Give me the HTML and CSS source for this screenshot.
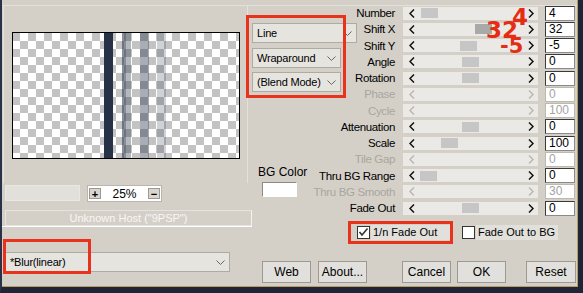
FILE: index.html
```html
<!DOCTYPE html>
<html lang="en">

<head>
    <meta charset="UTF-8">
    <meta name="viewport" content="width=device-width, initial-scale=1.0">
    <title>Line Filter</title>
    <link rel="stylesheet" href="styles.css">
</head>

<body>
    <div class="win">
        <div class="client">
            <!-- left : preview -->
            <div class="left">
                <div class="preview-panel">
                    <div class="preview"></div>
                </div>
                <div class="zoom-row">
                    <div class="zoom-field"></div>
                    <div class="zoom-box">
                        <button type="button" class="zbtn">+</button>
                        <span class="zval">25%</span>
                        <button type="button" class="zbtn">&minus;</button>
                    </div>
                </div>
                <div class="host">Unknown Host ("9PSP")</div>
                <div class="host-line"></div>
                <div class="combo blur">
                    <span>*Blur(linear)</span>
                    <svg width="9" height="5" viewBox="0 0 9 5"><polyline points="0.5,0.5 4.5,4.5 8.5,0.5" /></svg>
                </div>
            </div>

            <!-- right : settings -->
            <div class="right">
                <div class="controls">
                    <div class="mid">
                        <div class="combo c-line">
                            <span>Line</span>
                            <svg width="9" height="5" viewBox="0 0 9 5"><polyline points="0.5,0.5 4.5,4.5 8.5,0.5" /></svg>
                        </div>
                        <div class="combo c-wrap">
                            <span>Wraparound</span>
                            <svg width="9" height="5" viewBox="0 0 9 5"><polyline points="0.5,0.5 4.5,4.5 8.5,0.5" /></svg>
                        </div>
                        <div class="combo c-blend">
                            <span>(Blend Mode)</span>
                            <svg width="9" height="5" viewBox="0 0 9 5"><polyline points="0.5,0.5 4.5,4.5 8.5,0.5" /></svg>
                        </div>
                        <div class="bgcolor">
                            <span>BG Color</span>
                            <div class="swatch"></div>
                        </div>
                    </div>

                    <div class="params" id="params"></div>
                </div>

                <div class="checks">
                    <div class="chk">
                        <span class="box">
                            <svg width="11" height="11" viewBox="0 0 11 11"><polyline points="1.5,5 4,8 9.5,1.5" /></svg>
                        </span>
                        <span class="chk-label l1">1/n Fade Out</span>
                    </div>
                    <div class="chk chk2">
                        <span class="box"></span>
                        <span class="chk-label l2">Fade Out to BG</span>
                    </div>
                </div>

                <div class="buttons">
                    <button type="button" class="btn">Web</button>
                    <button type="button" class="btn b-about">About...</button>
                    <button type="button" class="btn b-cancel">Cancel</button>
                    <button type="button" class="btn b-ok">OK</button>
                    <button type="button" class="btn b-reset">Reset</button>
                </div>
            </div>
        </div>

        <!-- red marks -->
        <div class="mark m-combos"></div>
        <div class="mark m-blur"></div>
        <div class="mark m-fade"></div>
        <span class="note n-4">4</span>
        <span class="note n-32">32</span>
        <span class="note n-5">-5</span>
    </div>

    <script>
        // name, value, thumb offset (px in track), enabled
        const rows = [
            ["Number", "4", 4, true],
            ["Shift X", "32", 58, true],
            ["Shift Y", "-5", 43, true],
            ["Angle", "0", 45, true],
            ["Rotation", "0", 45, true],
            ["Phase", "0", null, false],
            ["Cycle", "100", null, false],
            ["Attenuation", "0", 45, true],
            ["Scale", "100", 24, true],
            ["Tile Gap", "0", null, false],
            ["Thru BG Range", "0", 3, true],
            ["Thru BG Smooth", "30", null, false],
            ["Fade Out", "0", 45, true]
        ];

        const $params = document.getElementById("params");
        const arrL = '<svg width="6" height="9" viewBox="0 0 6 9"><polyline points="5,0.5 1,4.5 5,8.5" /></svg>';
        const arrR = '<svg width="6" height="9" viewBox="0 0 6 9"><polyline points="1,0.5 5,4.5 1,8.5" /></svg>';

        rows.forEach(function (r, i) {
            const off = r[3] ? "" : " off";
            let thumb = "";
            if (r[2] !== null) {
                thumb = '<span class="thumb' + (i === 1 ? ' hot' : '') + '" style="margin-left:' + r[2] + 'px"></span>';
            }
            $params.insertAdjacentHTML("beforeend",
                '<div class="plabel' + off + '">' + r[0] + '</div>' +
                '<div class="sb' + off + '"><span class="arr l">' + arrL + '</span><span class="track">' + thumb +
                '</span><span class="arr r">' + arrR + '</span></div>' +
                '<div class="val' + off + '">' + r[1] + '</div>');
        });
    </script>
</body>

</html>
```

FILE: styles.css
```css
* {
    margin: 0;
    padding: 0;
    box-sizing: border-box;
}

body {
    width: 583px;
    height: 293px;
    overflow: hidden;
    background-color: #1f2536;
    font-family: "Liberation Sans", Arial, sans-serif;
    font-size: 11px;
    color: #000;
}

button {
    font-family: inherit;
    font-size: inherit;
    color: inherit;
}

.win {
    position: relative;
    width: 583px;
    height: 293px;
    border-left: 2px solid #2a3247;
    border-right: 5px solid #1f2536;
    border-bottom: 6px solid #1f2536;
}

.client {
    display: flex;
    height: 100%;
    background: linear-gradient(#d4d0c8 5px, #e4e1db 5px 6px, #d4d0c8 6px);
    border-right: 1px solid #b89d63;
    border-bottom: 1px solid #b89d63;
}

/* left side */
.left {
    width: 250px;
    display: flex;
    flex-direction: column;
    align-items: flex-start;
}

.preview-panel {
    margin: 5px 0 0 1px;
    width: 245px;
    height: 178px;
    border: 1px solid #e4e1db;
    border-bottom: 0;
    padding: 26px 0 0 8px;
}

.preview {
    width: 228px;
    height: 127px;
    border: 1px solid #000;
    background:
        linear-gradient(90deg,
            transparent 91px, #283246 91px 100px,
            transparent 100px 109px, rgba(40, 50, 70, 0.55) 109px 113px,
            rgba(40, 50, 70, 0.35) 113px 118px,
            transparent 118px 127px, rgba(40, 50, 70, 0.4) 127px 136px,
            transparent 136px 144px, rgba(40, 50, 70, 0.22) 144px 153px,
            transparent 153px),
        conic-gradient(#fff 25%, #c3c3c3 0 50%, #fff 0 75%, #c3c3c3 0);
    background-size: auto, 16px 16px;
    background-position: 0 0, -1px 0;
}

.zoom-row {
    display: flex;
    gap: 7px;
    margin: 2px 0 0 3px;
}

.zoom-field {
    width: 75px;
    height: 16px;
    background-color: #e2e0db;
    border: 1px solid #e9e7e2;
}

.zoom-box {
    width: 75px;
    height: 17px;
    background-color: #fff;
    border: 1px solid #b9b6af;
    display: flex;
    align-items: center;
    justify-content: space-between;
    padding: 0 1px;
}

.zbtn {
    width: 12px;
    height: 11px;
    background-color: #d9d6cf;
    border: 1px solid #9c9992;
    font-size: 11px;
    line-height: 8px;
    font-weight: bold;
}

.zval {
    font-size: 12px;
}

.host {
    margin: 8px 0 0 3px;
    width: 247px;
    height: 16px;
    border: 1px solid #e6e4df;
    border-right-color: #f4f3f0;
    color: #f7f7f5;
    font-size: 11px;
    line-height: 14px;
    text-align: center;
}

.host-line {
    width: 250px;
    height: 1px;
    background-color: #fff;
}

/* combos */
.combo {
    height: 20px;
    display: flex;
    align-items: center;
    justify-content: space-between;
    padding: 0 4px;
    background-color: #e6e4df;
    border: 1px solid #aeaba4;
    letter-spacing: -0.2px;
}

.combo svg polyline {
    fill: none;
    stroke: #6a6761;
    stroke-width: 1;
}

.blur {
    margin: 25px 0 0 3px;
    width: 225px;
}

.mid {
    width: 95px;
    padding-top: 23px;
    display: flex;
    flex-direction: column;
    align-items: flex-start;
}

.c-line {
    width: 105px;
    margin-bottom: 5px;
}

.c-wrap,
.c-blend {
    width: 89px;
}

.c-wrap {
    margin-bottom: 4px;
}

.bgcolor {
    margin: 73px 0 0 6px;
    display: flex;
    flex-direction: column;
    align-items: flex-start;
    line-height: 15px;
    font-size: 12px;
}

.swatch {
    margin: 2px 0 0 4px;
    width: 35px;
    height: 15px;
    background-color: #fff;
    border: 1px solid #fff;
    border-top-color: #8d8a84;
    border-left-color: #8d8a84;
}

/* parameter table */
.controls {
    display: flex;
    height: 218px;
}

.params {
    flex: 1;
    display: grid;
    grid-template-columns: 48px 135px 30px;
    grid-auto-rows: 16.25px;
    column-gap: 7.5px;
    padding-top: 5px;
    align-content: start;
}

.plabel {
    display: flex;
    justify-content: flex-end;
    align-items: center;
    white-space: nowrap;
    font-size: 11.5px;
    letter-spacing: -0.35px;
}

.plabel.off {
    color: #aaa69e;
}

.sb {
    align-self: center;
    height: 13px;
    display: flex;
    align-items: center;
    background-color: #ebe9e5;
}

.arr {
    width: 14px;
    display: flex;
}

.arr.l {
    padding-left: 6px;
}

.arr.r {
    padding-left: 4px;
}

.arr polyline {
    fill: none;
    stroke: #111;
    stroke-width: 1.5;
}

.sb.off .arr polyline {
    stroke: #bcb8b0;
}

.track {
    flex: 1;
    display: flex;
    align-items: center;
}

.thumb {
    width: 17px;
    height: 10px;
    background-color: #c6c6c6;
}

.thumb.hot {
    background-color: #a9a9a9;
}

.val {
    align-self: center;
    height: 15px;
    background-color: #fff;
    border: 1px solid #3a3a3a;
    border-right-color: #8a8a8a;
    border-bottom-color: #8a8a8a;
    padding-left: 3px;
    font-size: 12px;
    line-height: 13px;
}

.val.off {
    color: #a4a4a4;
    border-color: #bdb9b1;
}

/* checkboxes */
.checks {
    height: 32px;
    display: flex;
    padding: 7px 0 0 105px;
}

.chk {
    display: flex;
    align-items: center;
    height: 15px;
}

.chk2 {
    margin-left: 12px;
}

.box {
    width: 13px;
    height: 13px;
    background-color: #fff;
    border: 1px solid #333;
    display: flex;
    align-items: center;
    justify-content: center;
}

.box polyline {
    fill: none;
    stroke: #333;
    stroke-width: 1.6;
}

.chk-label {
    margin-left: 1px;
    height: 15px;
    background-color: #e2e0db;
    line-height: 15px;
    padding-left: 2px;
    font-size: 11px;
    white-space: nowrap;
}

.l1 {
    width: 79px;
}

.l2 {
    width: 82px;
}

/* buttons */
.buttons {
    display: flex;
    padding: 11px 0 0 10px;
}

.btn {
    width: 49px;
    height: 22px;
    background-color: #e2e0dc;
    border: 1px solid #9d9a94;
    font-size: 12px;
}

.b-about {
    margin-left: 7px;
}

.b-cancel {
    margin-left: 35px;
}

.b-ok {
    margin-left: 6px;
}

.b-reset {
    margin-left: 20px;
    width: 50px;
}

/* red annotation */
.mark {
    position: absolute;
    border: 3px solid #e8321b;
}

.m-combos {
    left: 244px;
    top: 15px;
    width: 100px;
    height: 83px;
}

.m-blur {
    left: 1px;
    top: 239px;
    width: 88px;
    height: 35px;
}

.m-fade {
    left: 346px;
    top: 221px;
    width: 105px;
    height: 23px;
}

.note {
    position: absolute;
    font-family: "DejaVu Sans", sans-serif;
    font-weight: bold;
    font-size: 23px;
    color: #e62d14;
}

.n-4 {
    left: 510px;
    top: 11px;
    line-height: 12px;
}

.n-32 {
    left: 484px;
    top: 23px;
    line-height: 14px;
}

.n-5 {
    left: 498px;
    top: 40px;
    font-size: 21px;
    line-height: 13px;
}
```
